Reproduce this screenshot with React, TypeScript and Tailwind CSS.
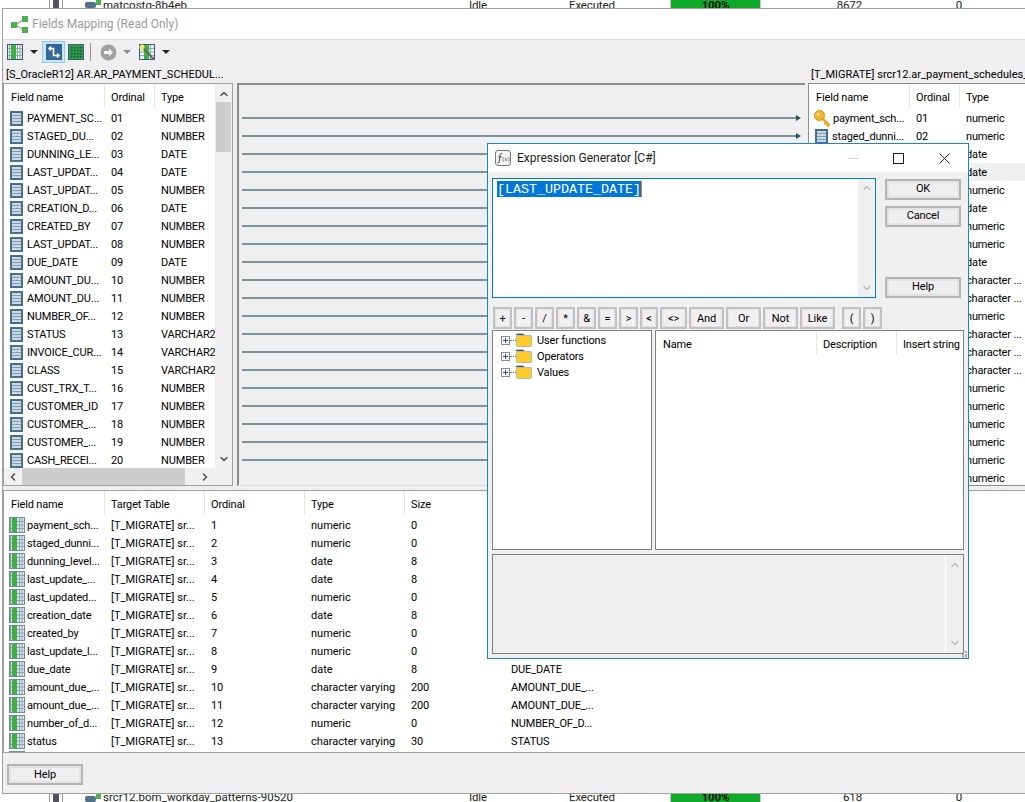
import { ChevronDown, ChevronLeft, ChevronRight, ChevronUp } from 'lucide-react'

const SOURCE = [
  ['PAYMENT_SC...', 'NUMBER'], ['STAGED_DU...', 'NUMBER'], ['DUNNING_LE...', 'DATE'], ['LAST_UPDAT...', 'DATE'],
  ['LAST_UPDAT...', 'NUMBER'], ['CREATION_D...', 'DATE'], ['CREATED_BY', 'NUMBER'], ['LAST_UPDAT...', 'NUMBER'],
  ['DUE_DATE', 'DATE'], ['AMOUNT_DU...', 'NUMBER'], ['AMOUNT_DU...', 'NUMBER'], ['NUMBER_OF...', 'NUMBER'],
  ['STATUS', 'VARCHAR2'], ['INVOICE_CUR...', 'VARCHAR2'], ['CLASS', 'VARCHAR2'], ['CUST_TRX_T...', 'NUMBER'],
  ['CUSTOMER_ID', 'NUMBER'], ['CUSTOMER_...', 'NUMBER'], ['CUSTOMER_...', 'NUMBER'], ['CASH_RECEI...', 'NUMBER'],
]

const TARGET = [
  ['payment_sch...', 'numeric'], ['staged_dunni...', 'numeric'], ['dunning_level...', 'date'], ['last_update_...', 'date'],
  ['last_updated...', 'numeric'], ['creation_date', 'date'], ['created_by', 'numeric'], ['last_update_l...', 'numeric'],
  ['due_date', 'date'], ['amount_due_...', 'character ...'], ['amount_due_...', 'character ...'], ['number_of_d...', 'numeric'],
  ['status', 'character ...'], ['invoice_curr...', 'character ...'], ['class', 'character ...'], ['cust_trx_ty...', 'numeric'],
  ['customer_id', 'numeric'], ['customer_...', 'numeric'], ['customer_...', 'numeric'], ['cash_recei...', 'numeric'],
  ['gl_date', 'numeric'],
]

const MAPPED = [
  ['payment_sch...', '1', 'numeric', '0', 'PAYMENT_SC...'],
  ['staged_dunni...', '2', 'numeric', '0', 'STAGED_DU...'],
  ['dunning_level...', '3', 'date', '8', 'DUNNING_LE...'],
  ['last_update_...', '4', 'date', '8', 'LAST_UPDAT...'],
  ['last_updated...', '5', 'numeric', '0', 'LAST_UPDAT...'],
  ['creation_date', '6', 'date', '8', 'CREATION_D...'],
  ['created_by', '7', 'numeric', '0', 'CREATED_BY'],
  ['last_update_l...', '8', 'numeric', '0', 'LAST_UPDAT...'],
  ['due_date', '9', 'date', '8', 'DUE_DATE'],
  ['amount_due_...', '10', 'character varying', '200', 'AMOUNT_DUE_...'],
  ['amount_due_...', '11', 'character varying', '200', 'AMOUNT_DUE_...'],
  ['number_of_d...', '12', 'numeric', '0', 'NUMBER_OF_D...'],
  ['status', '13', 'character varying', '30', 'STATUS'],
]

const OPERATORS = [
  ['+', 'w-[19px]'], ['-', 'w-[19px]'], ['/', 'w-[19px]'], ['*', 'w-[19px]'], ['&', 'w-[19px]'], ['=', 'w-[19px]'],
  ['>', 'w-[19px]'], ['<', 'w-[18px]'], ['<>', 'w-[27px]'], ['And', 'w-[35px]'], ['Or', 'w-[35px]'], ['Not', 'w-[35px]'], ['Like', 'w-[35px]'],
]

// ── Icons ──────────────────────────────────────────────────────────────────────

function ColumnIcon() {
  return (
    <svg width="13" height="15" viewBox="0 0 13 15" className="shrink-0">
      <rect width="13" height="15" fill="#44708f" />
      <rect x="2" y="2" width="9" height="11" fill="#7f9fb4" />
      <path d="M2 3H11M2 6H11M2 9H11M2 12H11" stroke="#e3eaef" strokeWidth="1.4" />
    </svg>
  )
}

function GridColumnIcon() {
  return (
    <svg width="16" height="16" viewBox="0 0 16 16" className="shrink-0">
      <rect x="0.5" y="0.5" width="15" height="15" fill="#dfe6ee" stroke="#6d8ba3" />
      <path d="M10.5 1V15M13 1V15M1 4.5H15M1 8H15M1 11.5H15" stroke="#8ba3b8" />
      <rect x="3" y="1" width="5" height="14" fill="#3fae45" />
      <rect x="1" y="1" width="1" height="14" fill="#6aa57a" />
    </svg>
  )
}

function KeyIcon() {
  return (
    <svg width="17" height="17" viewBox="0 0 17 17" className="shrink-0">
      <circle cx="5.5" cy="5.5" r="5" fill="#f7b52c" stroke="#d98f12" />
      <circle cx="4.2" cy="4.2" r="1.4" fill="#fff3c4" />
      <path d="M8.5 8.5L15.5 15.5M12.5 12.5L10.5 14.5M15 15L13 16.5" stroke="#eba520" strokeWidth="2.6" />
    </svg>
  )
}

function FolderIcon() {
  return (
    <svg width="16" height="14" viewBox="0 0 16 14" className="shrink-0">
      <path d="M0.5 2V1H7L8 2Z" fill="#555" stroke="#555" strokeWidth="0.8" />
      <rect x="0.5" y="2.5" width="15" height="11" rx="1" fill="#fdcb2e" stroke="#b9b9a8" />
    </svg>
  )
}

function Expander() {
  return (
    <svg width="9" height="9" viewBox="0 0 9 9" className="shrink-0">
      <rect x="0.5" y="0.5" width="8" height="8" fill="#f4f4f4" stroke="#8a8a8a" />
      <path d="M2 4.5H7M4.5 2V7" stroke="#2e4f85" />
    </svg>
  )
}

function Caret({ gray }: { gray?: boolean }) {
  return (
    <svg width="8" height="4" viewBox="0 0 8 4" className="shrink-0">
      <path d="M0 0H8L4 4Z" fill={gray ? '#8a8a8a' : '#222'} />
    </svg>
  )
}

function ColumnsToolIcon() {
  return (
    <svg width="16" height="16" viewBox="0 0 16 16" className="shrink-0">
      <rect x="0.5" y="0.5" width="15" height="15" fill="#e6efec" stroke="#44577f" />
      <path d="M2.5 1V15M10.5 1V15M13 1V15M1 4.5H15M1 8H15M1 11.5H15" stroke="#8fb0aa" />
      <rect x="4" y="1" width="5" height="14" fill="#3fae45" />
    </svg>
  )
}

function DotGridIcon() {
  const spots = [3, 6, 9, 12]
  return (
    <svg width="16" height="16" viewBox="0 0 16 16" className="ml-[3px] shrink-0">
      <rect x="0.5" y="0.5" width="15" height="15" fill="#2f9a4c" stroke="#3b5f7c" />
      {spots.map((x) => spots.map((y) => <rect key={`${x}-${y}`} x={x} y={y} width="1.5" height="1.5" fill="#17592f" />))}
    </svg>
  )
}

function ShareIcon() {
  return (
    <svg width="17" height="17" viewBox="0 0 17 17" className="shrink-0">
      <path d="M5 9L12 3.5M5 9L12 13.5" stroke="#9aa8a0" strokeWidth="1.2" fill="none" />
      <rect x="0" y="6" width="6" height="6" fill="#4cb050" />
      <rect x="11" y="0" width="6" height="6" fill="#4cb050" />
      <rect x="11" y="11" width="6" height="6" fill="#4cb050" />
    </svg>
  )
}

function FxIcon() {
  return (
    <svg width="16" height="16" viewBox="0 0 16 16" className="shrink-0">
      <rect x="0.5" y="0.5" width="15" height="15" rx="2.5" fill="#f4f4f4" stroke="#777" />
      <path d="M7 3.5C5.5 3 5.2 4 5 6L4.2 11.5C4 13 3.3 13.3 2.5 13M3.5 7H6.5" stroke="#444" fill="none" />
      <path d="M8.5 7L8 8.5V10.5L8.5 12M13.5 7L14 8.5V10.5L13.5 12M9.8 8L12.2 11M12.2 8L9.8 11" stroke="#777" fill="none" strokeWidth="0.8" />
    </svg>
  )
}

// ── Shared pieces ──────────────────────────────────────────────────────────────

function Head({ label, className }: { label: string; className: string }) {
  return (
    <div className={`h-[25px] shrink-0 flex items-center pl-[7px] pt-[4px] ${className}`}>
      <span className="truncate">{label}</span>
    </div>
  )
}

function HeadSep({ children, className }: { children: string; className: string }) {
  return (
    <div className={`h-[25px] shrink-0 pl-[7px] pt-[4px] relative flex items-center ${className}`}>
      <div className="w-px h-[24px] bg-[#e5e5e5] absolute left-0 top-0" />
      <span className="whitespace-nowrap">{children}</span>
    </div>
  )
}

function WinButton({ label, className = '' }: { label: string; className?: string }) {
  return (
    <div className={`w-[76px] h-[21px] flex items-center justify-center border-2 border-[#b4b4b4] shadow-[inset_0_0_0_2px_#e3e3e3] bg-[#efefef] text-black ${className}`}>
      {label}
    </div>
  )
}

function UnderlyingRow({ name, count, shift }: { name: string; count: string; shift: string }) {
  return (
    <div className="h-2 shrink-0 overflow-hidden bg-white flex items-start text-[11.5px] text-[#222]">
      <div className="w-[49px] shrink-0 self-stretch" />
      <div className="w-[4px] shrink-0 self-stretch border-l border-[#999]" />
      <div className="w-[6px] shrink-0 self-stretch bg-[#565266]" />
      <div className="w-[4px] shrink-0 self-stretch border-r border-[#999]" />
      <div className="w-[22px] shrink-0" />
      <svg width="16" height="8" viewBox="0 0 16 8" className="shrink-0 self-center">
        <rect x="0" y="2" width="11" height="6" rx="2" fill="#4f7189" />
        <rect x="11" y="0" width="5" height="5" fill="#4cb050" />
      </svg>
      <div className="w-[2px] shrink-0" />
      <div className={`w-[366px] shrink-0 whitespace-nowrap tracking-normal ${shift}`}>{name}</div>
      <div className={`w-[100px] shrink-0 ${shift}`}>Idle</div>
      <div className={`w-[101px] shrink-0 ${shift}`}>Executed</div>
      <div className="w-[91px] shrink-0 self-stretch bg-[#10aa2a] border-x border-[#c8c8c8] text-center font-bold text-[#111] overflow-hidden">
        <div className={shift}>100%</div>
      </div>
      <div className={`w-[101px] shrink-0 text-right ${shift}`}>{count}</div>
      <div className={`w-[100px] shrink-0 text-right ${shift}`}>0</div>
    </div>
  )
}

// ── Main component ─────────────────────────────────────────────────────────────

export default function App() {
  return (
    <div className="w-[1025px] h-[802px] relative overflow-hidden flex flex-col bg-white text-black text-[11px] tracking-[-0.15px] font-['Roboto','Liberation_Sans',sans-serif]">
      <UnderlyingRow name="matcostg-8b4eb" count="8672" shift="-mt-[3px]" />

      {/* Fields mapping window */}
      <div className="flex-1 min-h-0 ml-[2px] flex flex-col border-l border-y border-[#a0a0a0] bg-[#efefef]">
        <div className="h-[31px] shrink-0 bg-white flex items-center pl-[8px] gap-[4px] border-b border-[#dcdcdc]">
          <ShareIcon />
          <span className="text-[12px] tracking-normal text-[#9a9a9a]">Fields Mapping (Read Only)</span>
        </div>

        {/* Toolbar */}
        <div className="h-[26px] shrink-0 flex items-center pl-[4px] pb-[2px]">
          <ColumnsToolIcon />
          <div className="ml-[7px]"><Caret /></div>
          <div className="ml-[4px] w-[23px] h-[22px] flex items-center justify-center bg-[#cce4f7] border border-[#90c8f0]">
            <svg width="16" height="16" viewBox="0 0 16 16">
              <rect width="16" height="16" fill="#336699" />
              <path d="M3 4.5H7.5V11.5H12.5M11 9.5L13 11.5L11 13.5M5 2.5L3 4.5L5 6.5" stroke="#fff" strokeWidth="1.6" fill="none" />
            </svg>
          </div>
          <DotGridIcon />
          <div className="ml-[6px] w-px h-[18px] bg-[#8f8f8f]" />
          <svg width="17" height="17" viewBox="0 0 17 17" className="ml-[9px]">
            <circle cx="8.5" cy="8.5" r="8" fill="#a0a0a0" />
            <path d="M4 7H9V4.5L13 8.5L9 12.5V10H4Z" fill="#f2f2f2" />
          </svg>
          <div className="ml-[6px]"><Caret gray /></div>
          <svg width="17" height="17" viewBox="0 0 17 17" className="ml-[8px]">
            <rect x="0.5" y="0.5" width="15" height="15" fill="#e6efec" stroke="#44577f" />
            <path d="M11.5 1V15M1 4.5H15M1 8H15M1 11.5H15" stroke="#8fb0aa" />
            <rect x="5" y="1" width="5" height="14" fill="#3fae45" />
            <path d="M3 3L15 15.5" stroke="#666" strokeWidth="2" />
            <circle cx="3" cy="3" r="2.5" fill="#f6e96a" />
          </svg>
          <div className="ml-[6px]"><Caret /></div>
        </div>

        {/* Table captions */}
        <div className="h-[17px] shrink-0 flex items-center pt-[2px] tracking-normal">
          <div className="w-[808px] shrink-0 pl-[3px]">[S_OracleR12] AR.AR_PAYMENT_SCHEDUL...</div>
          <div className="whitespace-nowrap">[T_MIGRATE] srcr12.ar_payment_schedules_...</div>
        </div>

        {/* Source / mapping / target */}
        <div className="h-[403px] shrink-0 flex">
          <div className="w-[230px] shrink-0 border border-[#a0a0a0] bg-white flex flex-col">
            <div className="flex-1 min-h-0 flex">
              <div className="w-[211px] shrink-0 overflow-hidden">
                <div className="flex">
                  <Head label="Field name" className="w-[100px]" />
                  <HeadSep className="w-[50px]">Ordinal</HeadSep>
                  <HeadSep className="w-[61px]">Type</HeadSep>
                </div>
                {SOURCE.map(([name, type], i) => (
                  <div key={i} className="h-[18px] flex items-center">
                    <div className="w-[100px] shrink-0 pl-[6px] flex items-center gap-[4px] whitespace-nowrap overflow-hidden">
                      <ColumnIcon />
                      <span className="mt-[2px]">{name}</span>
                    </div>
                    <div className="w-[50px] shrink-0 pl-[7px] pt-[2px]">{String(i + 1).padStart(2, '0')}</div>
                    <div className="w-[61px] shrink-0 pl-[7px] pt-[2px] whitespace-nowrap overflow-hidden">{type}</div>
                  </div>
                ))}
              </div>
              <div className="w-[17px] shrink-0 bg-[#f0f0f0] flex flex-col items-center">
                <ChevronUp size={12} strokeWidth={3} className="text-[#505050] mt-[4px] mb-[2px]" />
                <div className="w-[15px] h-[50px] bg-[#cdcdcd] mr-[1px]" />
                <ChevronDown size={12} strokeWidth={3} className="text-[#505050] mt-auto mb-[3px]" />
              </div>
            </div>
            <div className="h-[17px] shrink-0 bg-[#f0f0f0] flex items-center">
              <ChevronLeft size={12} strokeWidth={3} className="text-[#505050] ml-[3px]" />
              <div className="w-[163px] h-[17px] bg-[#cdcdcd] ml-[3px]" />
              <ChevronRight size={12} strokeWidth={3} className="text-[#505050] ml-[14px]" />
            </div>
          </div>

          <div className="w-[568px] shrink-0 ml-[4px] border-l-2 border-t-2 border-[#8c8c8c] border-b border-b-[#dcdcdc] bg-[#efefef] pt-[24px] pl-[3px] pr-[4px] overflow-hidden">
            {SOURCE.map((_, i) => (
              <div key={i} className="h-[18px] flex items-center">
                <div className="flex-1 h-[2px] bg-[#7a949c]" />
                <div className="w-0 h-0 border-y-[3px] border-y-transparent border-l-[5px] border-l-[#2f5060]" />
              </div>
            ))}
          </div>

          <div className="flex-1 min-w-0 ml-[3px] border-l border-t border-b border-[#8c8c8c] bg-white overflow-hidden">
            <div className="flex">
              <Head label="Field name" className="w-[100px]" />
              <HeadSep className="w-[50px]">Ordinal</HeadSep>
              <HeadSep className="w-[66px]">Type</HeadSep>
            </div>
            {TARGET.map(([name, type], i) => (
              <div key={i} className={`h-[18px] flex items-center ${i === 3 ? 'bg-[#efefef]' : ''}`}>
                <div className={`w-[100px] shrink-0 flex items-center whitespace-nowrap overflow-hidden ${i === 0 ? 'pl-[5px] gap-[2px]' : 'pl-[6px] gap-[4px]'}`}>
                  {i === 0 ? <KeyIcon /> : <ColumnIcon />}
                  <span className="mt-[2px]">{name}</span>
                </div>
                <div className="w-[50px] shrink-0 pl-[7px] pt-[2px]">{String(i + 1).padStart(2, '0')}</div>
                <div className="flex-1 pl-[7px] pt-[2px] whitespace-nowrap">{type}</div>
              </div>
            ))}
          </div>
        </div>

        {/* Mapped fields */}
        <div className="flex-1 min-h-0 mt-[4px] border-l border-t border-b border-[#a0a0a0] bg-white overflow-hidden">
          <div className="flex">
            <Head label="Field name" className="w-[100px]" />
            <HeadSep className="w-[100px]">Target Table</HeadSep>
            <HeadSep className="w-[100px]">Ordinal</HeadSep>
            <HeadSep className="w-[100px]">Type</HeadSep>
            <HeadSep className="w-[100px]">Size</HeadSep>
          </div>
          {MAPPED.map(([name, ordinal, type, size, source], i) => (
            <div key={i} className="h-[18px] flex items-center">
              <div className="w-[100px] shrink-0 pl-[5px] flex items-center gap-[2px] whitespace-nowrap overflow-hidden">
                <GridColumnIcon />
                <span className="mt-[2px]">{name}</span>
              </div>
              <div className="w-[100px] shrink-0 pl-[7px] pt-[2px] whitespace-nowrap tracking-normal">[T_MIGRATE] sr...</div>
              <div className="w-[100px] shrink-0 pl-[7px] pt-[2px]">{ordinal}</div>
              <div className="w-[100px] shrink-0 pl-[7px] pt-[2px] whitespace-nowrap tracking-normal">{type}</div>
              <div className="w-[100px] shrink-0 pl-[7px] pt-[2px]">{size}</div>
              <div className="pl-[7px] pt-[2px] whitespace-nowrap">{source}</div>
            </div>
          ))}
          <div className="h-[18px] flex items-center pl-[5px]">
            <GridColumnIcon />
          </div>
        </div>

        {/* Footer */}
        <div className="h-[40px] shrink-0 pl-[4px] pt-[11px]">
          <WinButton label="Help" className="pt-[2px]" />
        </div>
      </div>

      <UnderlyingRow name="srcr12.bom_workday_patterns-90520" count="618" shift="-mt-[5px]" />

      {/* Expression generator dialog */}
      <div className="absolute left-[487px] top-[143px] w-[482px] h-[516px] border border-[#1883d7] bg-[#f0f0f0] flex flex-col">
        <div className="h-[28px] shrink-0 bg-white flex items-center pl-[7px]">
          <FxIcon />
          <span className="ml-[6px] text-[12px] tracking-normal text-[#1a1a1a]">Expression Generator [C#]</span>
          <div className="ml-auto flex items-center">
            <div className="w-[10px] h-px bg-[#cccccc]" />
            <div className="ml-[35px] w-[11px] h-[11px] border border-[#222]" />
            <svg width="11" height="11" viewBox="0 0 11 11" className="ml-[35px] mr-[18px]">
              <path d="M0.5 0.5L10.5 10.5M10.5 0.5L0.5 10.5" stroke="#222" />
            </svg>
          </div>
        </div>

        <div className="flex-1 min-h-0 pl-[4px] pt-[6px] flex flex-col">
          <div className="flex h-[120px] shrink-0">
            <div className="w-[384px] shrink-0 border border-[#0078d7] bg-white flex">
              <div className="flex-1 pl-[4px] pt-[2px]">
                <div className="flex items-center h-[16px] tracking-normal font-['Liberation_Mono',monospace] text-[13.33px]">
                  <span className="bg-[#0078d7] text-white h-[16px] pt-px leading-[15px]">[LAST_UPDATE_DATE]</span>
                  <span className="w-px h-[16px] bg-[#e87a1d]" />
                </div>
              </div>
              <div className="w-[17px] shrink-0 bg-[#f0f0f0] flex flex-col items-center justify-between py-[3px]">
                <ChevronUp size={12} strokeWidth={3} className="text-[#c0c0c0]" />
                <ChevronDown size={12} strokeWidth={3} className="text-[#c0c0c0]" />
              </div>
            </div>
            <div className="ml-[9px] pt-px flex flex-col">
              <WinButton label="OK" />
              <WinButton label="Cancel" className="mt-[6px]" />
              <WinButton label="Help" className="mt-[50px]" />
            </div>
          </div>

          {/* Operators */}
          <div className="h-[22px] mt-[9px] shrink-0 flex gap-[2px] pl-px">
            {OPERATORS.map(([op, width]) => (
              <div key={op} className={`${width} shrink-0 flex items-center justify-center pt-[2px] border-2 border-[#c2c2c2] shadow-[inset_0_0_0_1px_#e3e3e3]`}>
                {op}
              </div>
            ))}
            <div className="w-[19px] ml-[5px] shrink-0 flex items-center justify-center pt-[2px] border-2 border-[#c2c2c2] shadow-[inset_0_0_0_1px_#e3e3e3]">(</div>
            <div className="w-[19px] shrink-0 flex items-center justify-center pt-[2px] border-2 border-[#c2c2c2] shadow-[inset_0_0_0_1px_#e3e3e3]">)</div>
          </div>

          <div className="h-[220px] mt-px shrink-0 flex">
            <div className="w-[160px] shrink-0 border border-[#808080] bg-white pt-px pl-[8px]">
              {['User functions', 'Operators', 'Values'].map((label) => (
                <div key={label} className="h-[16px] flex items-center">
                  <Expander />
                  <div className="w-[6px] border-t border-dotted border-[#777]" />
                  <FolderIcon />
                  <span className="ml-[5px] mt-[2px]">{label}</span>
                </div>
              ))}
            </div>
            <div className="w-[309px] shrink-0 ml-[3px] border border-[#808080] bg-white flex">
              <div className="w-[160px] h-[25px] pl-[7px] pt-[4px] flex items-center">Name</div>
              <HeadSep className="w-[80px]">Description</HeadSep>
              <HeadSep className="w-[67px]">Insert string</HeadSep>
            </div>
          </div>

          <div className="h-[100px] mt-[4px] shrink-0 w-[472px] border border-[#808080] bg-[#efefef] flex justify-end">
            <div className="w-[18px] border-l border-white flex flex-col items-center justify-between py-[4px]">
              <ChevronUp size={12} strokeWidth={3} className="text-[#c0c0c0]" />
              <ChevronDown size={12} strokeWidth={3} className="text-[#c0c0c0]" />
            </div>
          </div>
        </div>

        {/* Size grip */}
        <svg width="8" height="8" viewBox="0 0 8 8" className="absolute right-0 bottom-0">
          <path d="M5 1H7V3H5ZM2 4H4V6H2ZM5 4H7V6H5ZM0 6.5H2M2 6H4V8H2ZM5 6H7V8H5Z" fill="#b0b0b0" />
        </svg>
      </div>
    </div>
  )
}
